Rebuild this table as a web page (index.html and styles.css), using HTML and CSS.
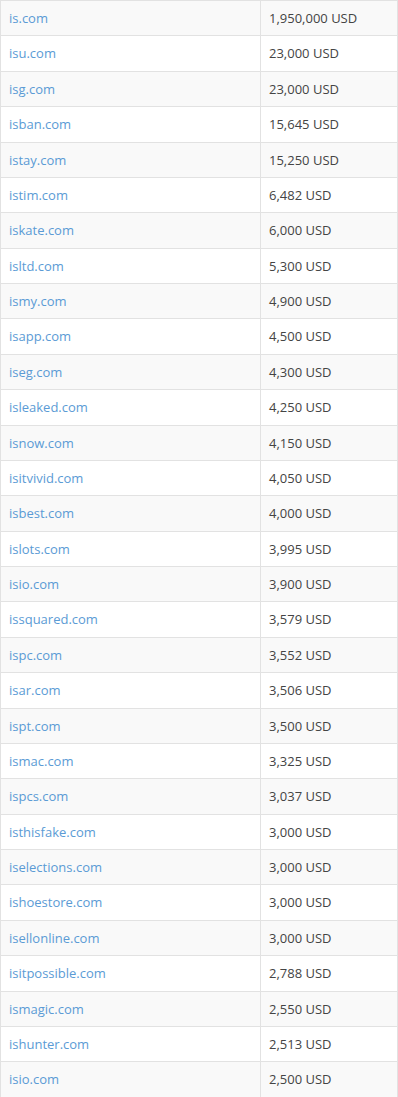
FILE: index.html
```html
<!DOCTYPE html>
<html>
<head>
<meta charset="utf-8">
<link rel="stylesheet" href="styles.css">
</head>
<body>
<table class="domains">
<tbody>
<tr><td><a href="#">is.com</a></td><td>1,950,000 USD</td></tr>
<tr><td><a href="#">isu.com</a></td><td>23,000 USD</td></tr>
<tr><td><a href="#">isg.com</a></td><td>23,000 USD</td></tr>
<tr><td><a href="#">isban.com</a></td><td>15,645 USD</td></tr>
<tr><td><a href="#">istay.com</a></td><td>15,250 USD</td></tr>
<tr><td><a href="#">istim.com</a></td><td>6,482 USD</td></tr>
<tr><td><a href="#">iskate.com</a></td><td>6,000 USD</td></tr>
<tr><td><a href="#">isltd.com</a></td><td>5,300 USD</td></tr>
<tr><td><a href="#">ismy.com</a></td><td>4,900 USD</td></tr>
<tr><td><a href="#">isapp.com</a></td><td>4,500 USD</td></tr>
<tr><td><a href="#">iseg.com</a></td><td>4,300 USD</td></tr>
<tr><td><a href="#">isleaked.com</a></td><td>4,250 USD</td></tr>
<tr><td><a href="#">isnow.com</a></td><td>4,150 USD</td></tr>
<tr><td><a href="#">isitvivid.com</a></td><td>4,050 USD</td></tr>
<tr><td><a href="#">isbest.com</a></td><td>4,000 USD</td></tr>
<tr><td><a href="#">islots.com</a></td><td>3,995 USD</td></tr>
<tr><td><a href="#">isio.com</a></td><td>3,900 USD</td></tr>
<tr><td><a href="#">issquared.com</a></td><td>3,579 USD</td></tr>
<tr><td><a href="#">ispc.com</a></td><td>3,552 USD</td></tr>
<tr><td><a href="#">isar.com</a></td><td>3,506 USD</td></tr>
<tr><td><a href="#">ispt.com</a></td><td>3,500 USD</td></tr>
<tr><td><a href="#">ismac.com</a></td><td>3,325 USD</td></tr>
<tr><td><a href="#">ispcs.com</a></td><td>3,037 USD</td></tr>
<tr><td><a href="#">isthisfake.com</a></td><td>3,000 USD</td></tr>
<tr><td><a href="#">iselections.com</a></td><td>3,000 USD</td></tr>
<tr><td><a href="#">ishoestore.com</a></td><td>3,000 USD</td></tr>
<tr><td><a href="#">isellonline.com</a></td><td>3,000 USD</td></tr>
<tr><td><a href="#">isitpossible.com</a></td><td>2,788 USD</td></tr>
<tr><td><a href="#">ismagic.com</a></td><td>2,550 USD</td></tr>
<tr><td><a href="#">ishunter.com</a></td><td>2,513 USD</td></tr>
<tr><td><a href="#">isio.com</a></td><td>2,500 USD</td></tr>
</tbody>
</table>
</body>
</html>
```

FILE: styles.css
```css
html, body {
  margin: 0;
  padding: 0;
  background: #fff;
}
body {
  font-family: "Open Sans", "Liberation Sans", sans-serif;
  font-size: 13px;
  color: #444;
}
.domains {
  width: 398px;
  border-collapse: collapse;
  border-spacing: 0;
  border: 1px solid #e2e2e2;
}
.domains td {
  border: 1px solid #e2e2e2;
  padding: 8px 8px;
  line-height: 18.37px;
  vertical-align: top;
  text-align: left;
}
.domains td:first-child {
  width: 243px;
}
.domains tr:nth-child(odd) td {
  background: #f9f9f9;
}
.domains a {
  color: #5b9bd5;
  text-decoration: none;
}
```
